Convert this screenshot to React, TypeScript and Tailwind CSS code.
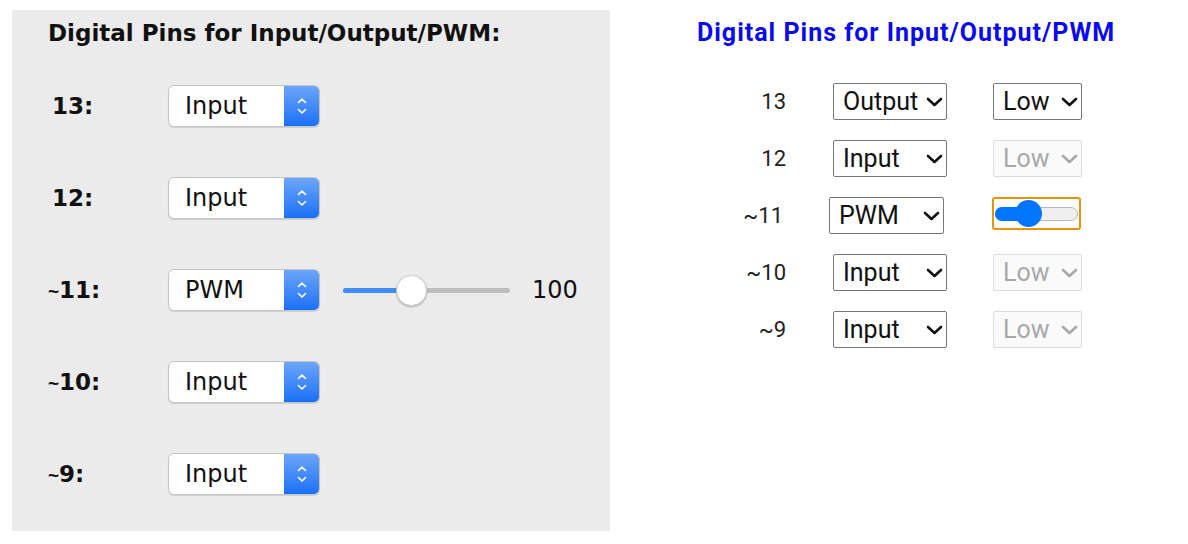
import React from "react";

const macFont = { fontFamily: '"DejaVu Sans", sans-serif' };

const leftRows = [
  { pin: "13:", mode: "Input" },
  { pin: "12:", mode: "Input" },
  { pin: "~11:", mode: "PWM", value: 100 },
  { pin: "~10:", mode: "Input" },
  { pin: "~9:", mode: "Input" },
];

const rightRows = [
  { pin: "13", mode: "Output", level: "Low" },
  { pin: "12", mode: "Input", level: null },
  { pin: "~11", mode: "PWM", level: "slider" },
  { pin: "~10", mode: "Input", level: null },
  { pin: "~9", mode: "Input", level: null },
];

const Stepper = () => (
  <svg width="12" height="22" viewBox="0 0 12 22" fill="none">
    <path d="M2.5 7.5 L6 4 L9.5 7.5" stroke="white" strokeWidth="1.6" strokeLinecap="round" strokeLinejoin="round" />
    <path d="M2.5 14.5 L6 18 L9.5 14.5" stroke="white" strokeWidth="1.6" strokeLinecap="round" strokeLinejoin="round" />
  </svg>
);

const Chevron = ({ color }: { color: string }) => (
  <svg width="17" height="10" viewBox="0 0 17 10" fill="none">
    <path d="M2 2 L8.5 8 L15 2" stroke={color} strokeWidth="2.6" strokeLinecap="round" strokeLinejoin="round" />
  </svg>
);

// mac-style pin label: the tilde is drawn small like the original
const PinLabel = ({ pin }: { pin: string }) =>
  pin.startsWith("~") ? (
    <span>
      <span className="font-['Liberation_Sans'] text-[19px]">~</span>
      {pin.slice(1)}
    </span>
  ) : (
    <span className="pl-[4px]">{pin}</span>
  );

const MacSelect = ({ value }: { value: string }) => (
  <div className="flex h-[42px] w-[152px] overflow-hidden rounded-[6px] border border-[#c4c4c4] bg-white shadow-[0_1px_1px_rgba(0,0,0,0.12)]">
    <div className="flex flex-1 items-center pl-[16px] text-[24px] text-[#111]">{value}</div>
    <div className="flex w-[35px] items-center justify-center bg-linear-to-b from-[#6aa6fa] to-[#176ff6]">
      <Stepper />
    </div>
  </div>
);

const MacSlider = ({ value }: { value: number }) => (
  <div className="ml-[23px] flex items-center">
    <div className="relative h-[5px] w-[167px] rounded-full bg-[#bdbdbd]">
      <div className="absolute left-0 top-0 h-[5px] w-[68px] rounded-full bg-[#3f8df6]" />
      <div className="absolute left-[53px] top-[-13px] h-[31px] w-[31px] rounded-full border border-[#cfcfcf] bg-white shadow-[0_1px_2px_rgba(0,0,0,0.25)]" />
    </div>
    <span className="ml-[22px] text-[24px] text-[#111]">{value}</span>
  </div>
);

const WebSelect = ({ value, width }: { value: string; width: string }) => (
  <div className={`${width} flex h-[37px] items-center justify-between rounded-[2px] border border-[#767676] bg-white pl-[9px] pr-[3px] text-[25px] text-[#111]`}>
    <span>{value}</span>
    <Chevron color="#111" />
  </div>
);

const EnabledLow = () => (
  <div className="flex h-[37px] w-[89px] items-center justify-between rounded-[2px] border border-[#767676] bg-white pl-[9px] pr-[3px] text-[25px] text-[#111]">
    <span>Low</span>
    <Chevron color="#111" />
  </div>
);

const DisabledLow = () => (
  <div className="flex h-[37px] w-[89px] items-center justify-between rounded-[2px] border border-[#dcdcdc] bg-[#fafafa] pl-[9px] pr-[3px] text-[25px] text-[#a8a8a8]">
    <span>Low</span>
    <Chevron color="#a8a8a8" />
  </div>
);

const WebSlider = () => (
  <div className="flex h-[33px] w-[89px] items-center rounded-[3px] border-2 border-[#e8930c] px-[1px]">
    <div className="relative h-[14px] w-[83px] rounded-full border border-[#b8b8b8] bg-[#efefef]">
      <div className="absolute left-[-1px] top-[-1px] h-[14px] w-[40px] rounded-full bg-[#0075ff]" />
      <div className="absolute left-[19px] top-[-7.5px] h-[27px] w-[27px] rounded-full bg-[#0075ff]" />
    </div>
  </div>
);

export default function App() {
  return (
    <div className="flex h-[544px] w-[1188px] bg-white">
      <div className="ml-[12px] mt-[10px] h-[521px] w-[598px] bg-[#ebebeb] pl-[36px]" style={macFont}>
        <h2 className="pt-[10px] text-[23px] font-bold leading-[26px] text-[#111]">Digital Pins for Input/Output/PWM:</h2>
        <div className="mt-[39px] flex flex-col gap-[50px]">
          {leftRows.map((r) => (
            <div key={r.pin} className="flex items-center">
              <div className="w-[120px] text-[23px] font-bold text-[#111]">
                <PinLabel pin={r.pin} />
              </div>
              <MacSelect value={r.mode} />
              {r.value !== undefined && <MacSlider value={r.value} />}
            </div>
          ))}
        </div>
      </div>

      <div className="flex flex-col pl-[87px]" style={{ fontFamily: "Roboto, sans-serif" }}>
        <h2 className="mt-[18px] text-[25px] font-bold leading-[30px] tracking-[1px] text-[#0a0aee]">Digital Pins for Input/Output/PWM</h2>
        <div className="mt-[35px] flex flex-col">
          {rightRows.map((r) => {
            const pwm = r.mode === "PWM";
            return (
              <div key={r.pin} className="flex h-[57px] items-start">
                <span className={`${pwm ? "w-[86px]" : "w-[89px]"} flex h-[37px] items-center justify-end text-[22px] text-[#222]`}>{r.pin}</span>
                <div className={pwm ? "ml-[46px]" : "ml-[47px]"}>
                  <WebSelect value={r.mode} width={pwm ? "w-[115px]" : "w-[114px]"} />
                </div>
                <div className={pwm ? "ml-[48px]" : "ml-[46px]"}>
                  {r.level === "Low" && <EnabledLow />}
                  {r.level === "slider" && <WebSlider />}
                  {r.level === null && <DisabledLow />}
                </div>
              </div>
            );
          })}
        </div>
      </div>
    </div>
  );
}
